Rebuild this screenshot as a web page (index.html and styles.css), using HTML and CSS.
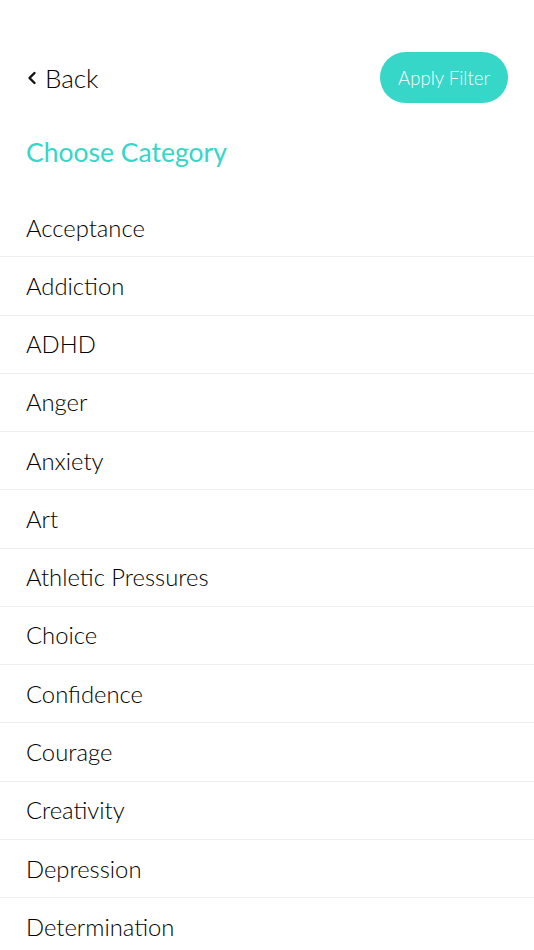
FILE: index.html
```html
<!DOCTYPE html>
<html lang="en">
<head>
  <meta charset="UTF-8" />
  <meta name="viewport" content="width=device-width, initial-scale=1.0" />
  <title>Choose Category</title>
  <link rel="stylesheet" href="styles.css">
</head>

<body>
  <header class="top-bar">
    <a class="back" href="#">
      <svg class="back-icon" width="10" height="14" viewBox="0 0 10 14">
        <path d="M7.5 2 L2.5 7 L7.5 12" fill="none" stroke="#111" stroke-width="2.4" stroke-linecap="round" stroke-linejoin="round"/>
      </svg>
      <span>Back</span>
    </a>
    <button class="apply-btn" type="button">Apply Filter</button>
  </header>

  <h2 class="section-title">Choose Category</h2>

  <ul class="category-list">
    <li>Acceptance</li>
    <li>Addiction</li>
    <li>ADHD</li>
    <li>Anger</li>
    <li>Anxiety</li>
    <li>Art</li>
    <li>Athletic Pressures</li>
    <li>Choice</li>
    <li>Confidence</li>
    <li>Courage</li>
    <li>Creativity</li>
    <li>Depression</li>
    <li>Determination</li>
  </ul>
</body>
</html>
```

FILE: styles.css
```css
* {
  box-sizing: border-box;
}

body {
  margin: 0;
  background: #fff;
  color: #000;
  font-family: Lato, "Open Sans", sans-serif;
  overflow: hidden;
}

/* Header with back link and filter button */
.top-bar {
  display: flex;
  align-items: center;
  justify-content: space-between;
  padding: 52px 26px 0;
}

.back {
  display: flex;
  align-items: center;
  gap: 8px;
  color: #000;
  text-decoration: none;
  font-size: 26px;
  font-weight: 300;
}

.back-icon {
  margin-left: 1px;
}

.apply-btn {
  height: 51px;
  padding: 0 18px;
  border: none;
  border-radius: 26px;
  background: #36d6c8;
  color: #fff;
  font-family: inherit;
  font-size: 18.6px;
  font-weight: 300;
}

/* Section title */
.section-title {
  margin: 33px 26px 31px;
  font-size: 26.5px;
  line-height: 32px;
  font-weight: 400;
  color: #36d6c8;
}

/* Category rows */
.category-list {
  list-style: none;
  margin: 0;
  padding: 0;
}

.category-list li {
  display: flex;
  align-items: center;
  height: 58.27px;
  padding: 0 26px;
  border-bottom: 1px solid #eeeeee;
  font-size: 23.8px;
  font-weight: 300;
}
```
